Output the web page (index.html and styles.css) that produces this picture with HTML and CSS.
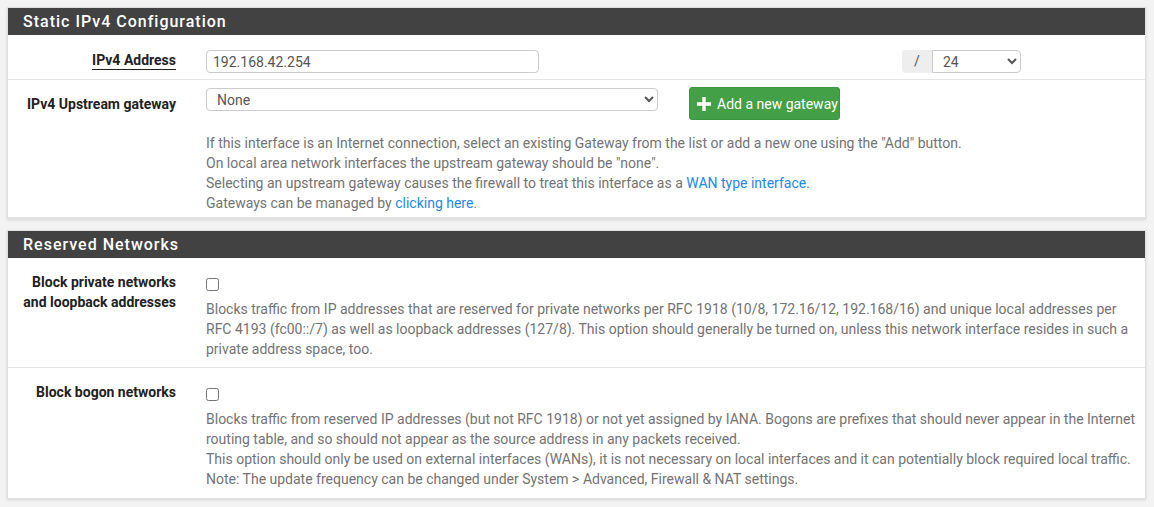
FILE: index.html
```html
<!DOCTYPE html>
<html>
<head>
<meta charset="utf-8">
<link rel="stylesheet" href="styles.css">
</head>
<body>
<div class="panel">
  <div class="panel-heading">Static IPv4 Configuration</div>
  <div class="row row-addr">
    <div class="label"><span class="ul">IPv4 Address</span></div>
    <div class="content addr">
      <input class="text-input" type="text" value="192.168.42.254">
      <div class="cidr">
        <span class="addon">/</span>
        <select class="sel sel-cidr"><option>24</option></select>
      </div>
    </div>
  </div>
  <div class="row row-gw">
    <div class="label">IPv4 Upstream gateway</div>
    <div class="content">
      <div class="gw-line">
        <select class="sel sel-gw"><option>None</option></select>
        <button class="btn-success" type="button">
          <svg class="plus" width="14" height="14" viewBox="0 0 14 14"><path d="M5.3 0h3.4v5.3H14v3.4H8.7V14H5.3V8.7H0V5.3h5.3z" fill="#fff"/></svg>
          Add a new gateway
        </button>
      </div>
      <div class="help help-gw">
        If this interface is an Internet connection, select an existing Gateway from the list or add a new one using the "Add" button.<br>
        On local area network interfaces the upstream gateway should be "none".<br>
        Selecting an upstream gateway causes the firewall to treat this interface as a <a href="#">WAN type interface</a>.<br>
        Gateways can be managed by <a href="#">clicking here</a>.
      </div>
    </div>
  </div>
</div>

<div class="panel">
  <div class="panel-heading">Reserved Networks</div>
  <div class="row row-cb">
    <div class="label">Block private networks<br>and loopback addresses</div>
    <div class="content">
      <div class="cb-line"><input type="checkbox" class="cb"></div>
      <div class="help">Blocks traffic from IP addresses that are reserved for private networks per RFC 1918 (10/8, 172.16/12, 192.168/16) and unique local addresses per RFC 4193 (fc00::/7) as well as loopback addresses (127/8). This option should generally be turned on, unless this network interface resides in such a private address space, too.</div>
    </div>
  </div>
  <div class="row row-cb row-last">
    <div class="label">Block bogon networks</div>
    <div class="content">
      <div class="cb-line"><input type="checkbox" class="cb"></div>
      <div class="help">Blocks traffic from reserved IP addresses (but not RFC 1918) or not yet assigned by IANA. Bogons are prefixes that should never appear in the Internet routing table, and so should not appear as the source address in any packets received.<br>
      This option should only be used on external interfaces (WANs), it is not necessary on local interfaces and it can potentially block required local traffic.<br>
      Note: The update frequency can be changed under System &gt; Advanced, Firewall &amp; NAT settings.</div>
    </div>
  </div>
</div>
</body>
</html>
```

FILE: styles.css
```css
* { box-sizing: border-box; }
html, body {
  margin: 0;
  padding: 0;
  background: #f3f3f3;
}
body {
  padding: 7px 8px 0 7px;
  font-family: Roboto, "Liberation Sans", sans-serif;
  font-size: 14px;
  line-height: 20px;
  color: #222;
}
.panel {
  background: #fff;
  border: 1px solid #e0e0e0;
  box-shadow: 0 1px 3px rgba(0,0,0,0.12);
  margin-bottom: 11px;
}
.panel-heading {
  background: #424242;
  color: #fff;
  height: 27px;
  line-height: 27px;
  padding-left: 15px;
  font-size: 16px;
  font-weight: 500;
  letter-spacing: 1px;
}
.row {
  display: flex;
  border-bottom: 1px solid #e4e4e4;
}
.row-last { border-bottom: none; }
.label {
  width: 168px;
  flex: none;
  text-align: right;
  font-weight: 700;
  color: #222;
}
.ul {
  border-bottom: 1px solid #222;
  padding-bottom: 1px;
}
.content {
  flex: 1;
  margin-left: 30px;
  padding-right: 8px;
  min-width: 0;
}
/* row 1 */
.row-addr { height: 45px; }
.row-addr .label { padding-top: 15px; }
.row-addr .content { padding-top: 15px; display: flex; }
.text-input {
  width: 333px;
  height: 23px;
  border: 1px solid #ccc;
  border-radius: 4px;
  padding: 0 6px;
  font-family: Roboto, "Liberation Sans", sans-serif;
  font-size: 14px;
  color: #555;
  background: #fff;
}
.cidr {
  display: flex;
  margin-left: 363px;
  height: 23px;
}
.addon {
  width: 30px;
  background: #eee;
  color: #555;
  text-align: center;
  line-height: 23px;
  border-radius: 4px 0 0 4px;
}
.sel {
  font-family: Roboto, "Liberation Sans", sans-serif;
  font-size: 14px;
  color: #555;
  border: 1px solid #ccc;
  border-radius: 4px;
  background: #fff;
  padding: 0 6px;
}
.sel-cidr {
  width: 89px;
  height: 23px;
  border-radius: 0 4px 4px 0;
}
/* row 2 */
.row-gw { height: 138px; }
.row-gw .label { padding-top: 14px; }
.row-gw .content { padding-top: 7px; }
.gw-line {
  display: flex;
  align-items: flex-start;
  height: 33px;
}
.sel-gw {
  width: 452px;
  height: 23px;
  margin-top: 1px;
}
.btn-success {
  margin-left: 31px;
  height: 33px;
  width: 151px;
  background: #43a047;
  border: 1px solid #3d9440;
  border-radius: 3px;
  color: #fff;
  font-family: Roboto, "Liberation Sans", sans-serif;
  font-size: 14px;
  display: flex;
  align-items: center;
  padding: 0 0 0 7px;
  gap: 6px;
}
.help {
  color: #737373;
}
.help-gw { margin-top: 13px; }
a { color: #1e88e5; text-decoration: none; }
/* checkbox rows */
.row-cb .label { padding-top: 14px; }
.row-cb .content { padding-top: 14px; padding-bottom: 8px; }
.row-last .label { padding-top: 14px; }
.row-last .content { padding-top: 14px; padding-bottom: 9px; }
.cb-line { height: 20px; }
.cb {
  margin: 6px 0 0 0;
  width: 13px;
  height: 13px;
}
.row-cb .help { margin-top: 7px; }
```
